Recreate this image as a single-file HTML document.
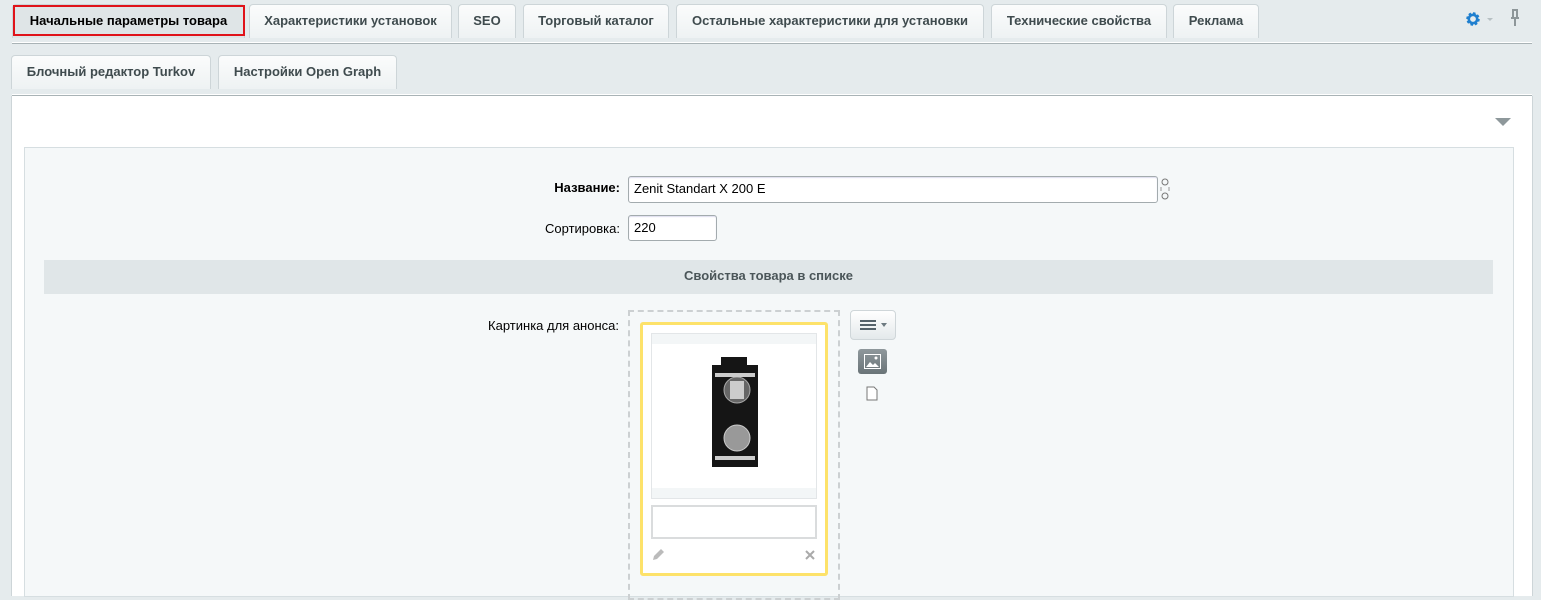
<!DOCTYPE html>
<html><head><meta charset="utf-8"><style>
*{box-sizing:border-box}
body{margin:0;width:1541px;height:584px;overflow:hidden;background:#e5ebed;font-family:"Liberation Sans",Arial,sans-serif;position:relative}
.a{position:absolute}
.tab{position:absolute;height:34px;background:linear-gradient(#fbfcfc,#eef2f3);border:1px solid #cdd5d8;border-bottom:none;border-radius:4px 4px 0 0;font-size:13px;font-weight:bold;color:#3f4b4e;text-align:center;line-height:32px}
.line{position:absolute;left:12px;width:1520px;height:2px;background:#a9b3b6;border-top:1px solid #fff}
label{position:absolute;font-size:13px;color:#000;text-align:right}
.inp{position:absolute;background:#fff;border:1px solid #a3abae;border-radius:3px;font-size:13px;padding-left:5px;line-height:24px;box-shadow:inset 0 1px 1px #dde}
</style></head><body>
<div class="tab" style="left:12px;top:4px;width:233px;background:#dfe5e7;color:#000">Начальные параметры товара</div>
<div class="a" style="left:13px;top:5px;width:232px;height:31px;border:2px solid #e0131a"></div>
<div class="tab" style="left:249px;top:4px;width:203px">Характеристики установок</div>
<div class="tab" style="left:458px;top:4px;width:58px">SEO</div>
<div class="tab" style="left:523px;top:4px;width:146px">Торговый каталог</div>
<div class="tab" style="left:676px;top:4px;width:308px">Остальные характеристики для установки</div>
<div class="tab" style="left:991px;top:4px;width:176px">Технические свойства</div>
<div class="tab" style="left:1173px;top:4px;width:86px">Реклама</div>
<div class="line" style="top:42px"></div>
<svg class="a" style="left:1465px;top:11px" width="16" height="16" viewBox="0 0 16 16"><circle cx="8" cy="8" r="5" fill="none" stroke="#1f7fcf" stroke-width="3.5" stroke-dasharray="2.2 1.7"/><circle cx="8" cy="8" r="4.2" fill="none" stroke="#1f7fcf" stroke-width="2.6"/></svg>
<div class="a" style="left:1487px;top:18px;width:0;height:0;border:3px solid transparent;border-top:3px solid #b7c0c3"></div>
<svg class="a" style="left:1508px;top:9px" width="14" height="18" viewBox="0 0 14 18"><path d="M4 1h6M5 1v7M9 1v7M3 9h8M7 9v8" stroke="#8d9699" stroke-width="2" fill="none"/></svg>
<div class="tab" style="left:11px;top:55px;width:200px">Блочный редактор Turkov</div>
<div class="tab" style="left:218px;top:55px;width:179px">Настройки Open Graph</div>
<div class="line" style="top:94px"></div>
<div class="a" style="left:11px;top:96px;width:1522px;height:500px;background:#fff;border-left:1px solid #cdd5d8;border-right:1px solid #cdd5d8"></div>
<div class="a" style="left:1495px;top:118px;width:0;height:0;border-left:8px solid transparent;border-right:8px solid transparent;border-top:8px solid #8e989b"></div>
<div class="a" style="left:24px;top:147px;width:1490px;height:450px;background:#f5f8f9;border:1px solid #d6dee1"></div>
<label style="left:400px;top:180px;width:220px;font-weight:bold">Название:</label>
<div class="inp" style="left:628px;top:176px;width:530px;height:27px">Zenit Standart X 200 E</div>
<svg class="a" style="left:1159px;top:177px" width="12" height="24" viewBox="0 0 12 24"><rect x="3" y="2" width="6" height="6" rx="3" fill="none" stroke="#777"/><rect x="3" y="16" width="6" height="6" rx="3" fill="none" stroke="#777"/><path d="M1 11h2M9 11h2M1 13h2M9 13h2" stroke="#999"/></svg>
<label style="left:400px;top:221px;width:220px">Сортировка:</label>
<div class="inp" style="left:628px;top:215px;width:89px;height:26px">220</div>
<div class="a" style="left:44px;top:260px;width:1449px;height:34px;background:#e0e6e8;text-align:center;line-height:32px;font-size:13px;font-weight:bold;color:#4b5659">Свойства товара в списке</div>
<label style="left:400px;top:318px;width:219px">Картинка для анонса:</label>
<div class="a" style="left:628px;top:310px;width:212px;height:290px;border:2px dashed #ccd0d2"></div>
<div class="a" style="left:640px;top:322px;width:188px;height:254px;background:#fff;border:3px solid #fde26a;border-radius:3px"></div>
<div class="a" style="left:651px;top:333px;width:166px;height:166px;background:#fff;border:1px solid #e3e6e8"><div style="height:10px;background:#f3f6f7"></div><div style="position:absolute;bottom:0;left:0;right:0;height:10px;background:#f3f6f7"></div></div>
<svg class="a" style="left:700px;top:350px" width="70" height="125" viewBox="700 350 70 125"><path d="M721 357h26v8h11v102h-46v-102h9z" fill="#151515"/><circle cx="737" cy="390" r="13" fill="#666" stroke="#aaa"/><rect x="730" y="381" width="14" height="18" fill="#ccc"/><circle cx="737" cy="438" r="13" fill="#999" stroke="#ccc"/><rect x="715" y="373" width="40" height="4" fill="#ccc"/><rect x="715" y="456" width="40" height="4" fill="#ccc"/></svg>
<div class="a" style="left:651px;top:505px;width:166px;height:34px;border:2px solid #dadcdd;background:#fff"></div>
<svg class="a" style="left:651px;top:548px" width="14" height="14" viewBox="0 0 14 14"><path d="M2 12l1-4 7-7 3 3-7 7z" fill="#bbb"/></svg>
<svg class="a" style="left:804px;top:549px" width="12" height="12" viewBox="0 0 12 12"><path d="M2 2l8 8M10 2l-8 8" stroke="#aaa" stroke-width="2"/></svg>
<div class="a" style="left:850px;top:310px;width:46px;height:30px;background:linear-gradient(#fff,#e4e9eb);border:1px solid #cfd6d9;border-radius:4px"></div>
<div class="a" style="left:860px;top:320px;width:16px;height:2px;background:#55626a;box-shadow:0 4px 0 #55626a,0 8px 0 #55626a"></div>
<div class="a" style="left:881px;top:323px;border:3px solid transparent;border-top:4px solid #6d7a80"></div>
<div class="a" style="left:858px;top:349px;width:29px;height:25px;background:linear-gradient(#8f989c,#6a7478);border-radius:3px"></div>
<svg class="a" style="left:864px;top:354px" width="17" height="15" viewBox="0 0 17 15"><rect x="0.5" y="0.5" width="16" height="14" fill="none" stroke="#fff"/><path d="M2 13l4-5 3 3 2-2 4 4z" fill="#fff"/><circle cx="12" cy="4" r="1.5" fill="#fff"/></svg>
<svg class="a" style="left:866px;top:386px" width="12" height="15" viewBox="0 0 12 15"><path d="M1 1h7l3 3v10H1z" fill="#fff" stroke="#777"/></svg>
</body></html>
